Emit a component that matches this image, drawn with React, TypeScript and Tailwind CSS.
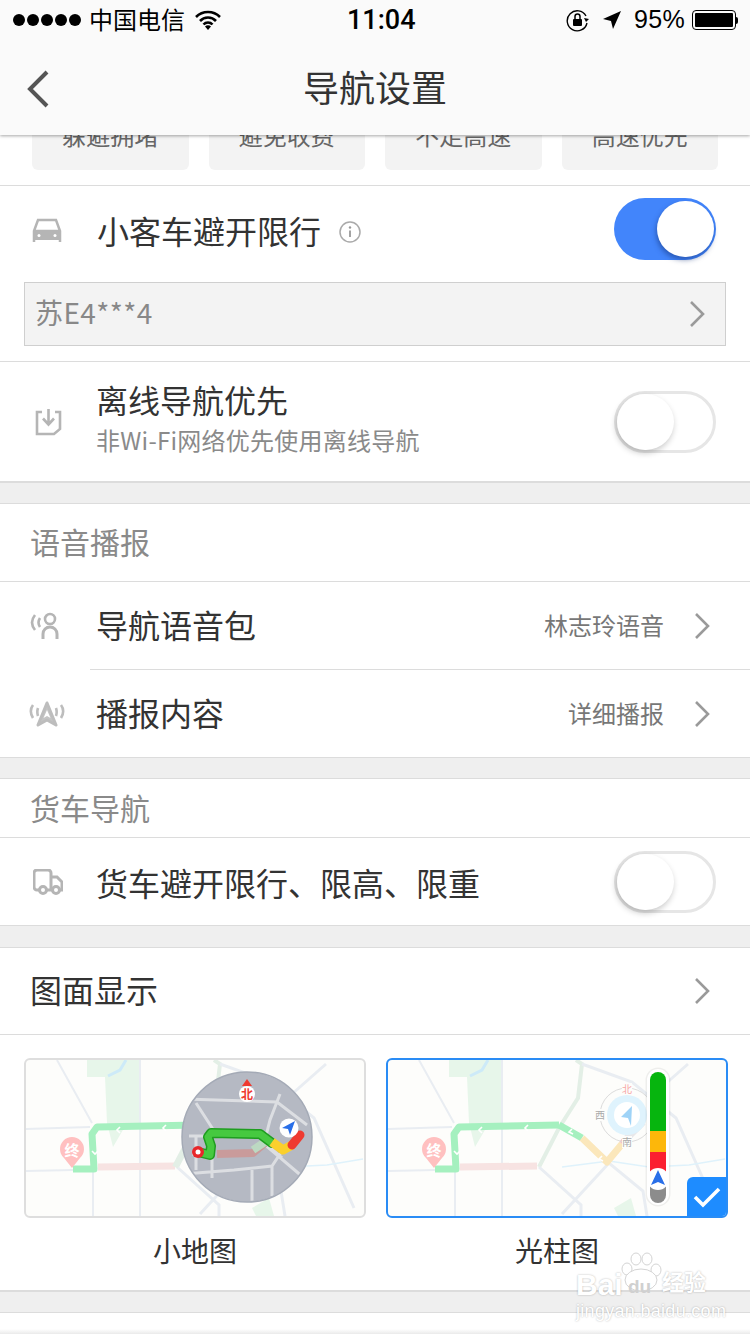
import type { ReactNode } from "react";

const Chevron = () => (
  <svg width="16" height="28" viewBox="0 0 16 28" fill="none" className="shrink-0">
    <path d="M2 2l12 12L2 26" stroke="#9a9a9a" strokeWidth="2.6" />
  </svg>
);

const Band = ({ className }: { className?: string }) => (
  <div className={`bg-[#efefef] border-y border-[#dcdcdc] ${className ?? "h-[22px]"}`} />
);

const Toggle = ({ on }: { on?: boolean }) =>
  on ? (
    <div className="relative w-[102px] h-[62px] rounded-full bg-[#4285fb] shrink-0">
      <div className="absolute right-[2px] top-[3px] w-[57px] h-[56px] rounded-full bg-white shadow-[-1px_3px_5px_rgba(20,50,120,0.5)]" />
    </div>
  ) : (
    <div className="relative w-[102px] h-[62px] rounded-full border-[3px] border-[#e6e6e6] bg-white shrink-0">
      <div className="absolute left-0 top-0 w-[57px] h-[56px] rounded-full bg-white shadow-[-1px_3px_6px_rgba(0,0,0,0.22)]" />
    </div>
  );

const Row = ({
  icon,
  title,
  value,
  className,
}: {
  icon: ReactNode;
  title: string;
  value: string;
  className?: string;
}) => (
  <div className={`flex items-center pl-[30px] pr-[40px] ${className ?? ""}`}>
    <div className="w-[66px] shrink-0">{icon}</div>
    <div className="flex-1 text-[32px] text-[#333] pb-[4px]">{title}</div>
    <div className="text-[24px] text-[#777] mr-[30px] pb-[2px]">{value}</div>
    <Chevron />
  </div>
);

const BaseMap = () => (
  <>
    <polygon points="63,2 116,2 116,65 103,65 89,89 83,65 81,19 63,19" fill="#e7f6ea" />
    <path d="M84 18l12-6 6-10" stroke="#cdeaf8" strokeWidth="3" fill="none" />
    <path d="M33 2l35 63M1 71l65-2M1 113l48-1M69 112v46M116 2v156" stroke="#e9edf2" strokeWidth="2" fill="none" />
    <path d="M190 2l6 4-4 34-19 30-20 39" stroke="#e3efe6" strokeWidth="4" fill="none" />
    <path d="M196 6l50 18 44 36 40 90M176 156l47-51 34 28 4 25M153 109l42 38v11M268 36l34-30" stroke="#e9edf2" strokeWidth="3" fill="none" />
    <path d="M176 109l47-6 40 6 40-2 36-6" stroke="#dff2fb" strokeWidth="1.5" fill="none" />
    <polygon points="228,150 245,140 250,158 232,158" fill="#e7f6ea" />
    <path d="M74 109l77-1" stroke="#f7e3e2" strokeWidth="7" fill="none" />
    <path d="M49 111h21l-2-35 5-7 100-2" stroke="#a5f0bf" strokeWidth="7" fill="none" strokeLinejoin="round" />
    <path d="M96 69l-3 3 3 3M142 67l-3 3 3 3M68 93l3 3 3-3" stroke="#fff" strokeWidth="1.6" fill="none" />
    <path d="M48 110l-8-10a12 12 0 1 1 16 0z" fill="#ffc0c0" />
    <text x="48" y="98" textAnchor="middle" fontSize="15" fill="#fff" fontWeight="700">终</text>
  </>
);

const SmallMap = () => (
  <svg viewBox="0 0 338 156" className="block w-full h-full">
    <defs>
      <clipPath id="disc">
        <circle cx="223" cy="79" r="64" />
      </clipPath>
    </defs>
    <g transform="translate(-2 -2)">
      <BaseMap />
      <path d="M173 67l-22 42" stroke="#e3efe6" strokeWidth="6" />
      <circle cx="223" cy="79" r="65" fill="#b5b9c3" stroke="#a4aab6" strokeWidth="1.5" />
      <g clipPath="url(#disc)" fill="none" stroke="#dcdee2" strokeWidth="3">
        <path d="M160 41l93 3 30 23M172 45l22 34M256 36l-10 26-6 24 40 34M165 78h30M168 96h8M172 78v34M188 100v20M160 116l50-4 38-4 12-18M228 112v34M248 108v30M258 100l-16-14" />
      </g>
      <path d="M193 96l36-1 12-10" stroke="#c99b9b" strokeWidth="8" fill="none" strokeLinejoin="round" />
      <path d="M229 92l12-8" stroke="#bcd9c2" strokeWidth="8" />
      <path d="M174 94l12 3 1-9-3-9 3-4 49 1 12 9" stroke="#1f9d20" strokeWidth="10" fill="none" strokeLinejoin="round" strokeLinecap="round" />
      <path d="M174 94l12 3 1-9-3-9 3-4 49 1 12 9" stroke="#46c940" strokeWidth="7" fill="none" strokeLinejoin="round" strokeLinecap="round" />
      <path d="M248 84l11 8 9-5" stroke="#fbd02c" strokeWidth="9" fill="none" strokeLinejoin="round" />
      <path d="M268 87l8-10" stroke="#ef3a30" strokeWidth="9" strokeLinecap="round" />
      <circle cx="174" cy="94" r="6" fill="#e8262a" />
      <circle cx="174" cy="94" r="2.5" fill="#fff" />
      <circle cx="265" cy="70" r="9.5" fill="#fff" />
      <path d="M271 63l-13 7 6 1 2 6z" fill="#2a6fe8" />
      <circle cx="223" cy="36" r="8" fill="#fff" />
      <path d="M223 21l5 7h-10z" fill="#ef3a30" />
      <text x="223" y="41" textAnchor="middle" fontSize="12" fill="#ef3a30" fontWeight="700">北</text>
    </g>
  </svg>
);

const BarMap = () => (
  <svg viewBox="0 0 338 156" className="block w-full h-full">
    <g transform="translate(-2 -2)">
      <BaseMap />
      <path d="M173 67l23 13" stroke="#a5f0bf" strokeWidth="7" fill="none" />
      <path d="M196 80l25 24 15-18" stroke="#fbe7bb" strokeWidth="7" fill="none" strokeLinejoin="round" />
      <path d="M236 86l5-6" stroke="#f7c4c2" strokeWidth="7" />
      <path d="M241 80l16-16" stroke="#e8e8ea" strokeWidth="7" />
      <path d="M186 71l-3 3 4 2M216 98l-3 3 4 2" stroke="#fff" strokeWidth="1.6" fill="none" />
      <circle cx="241" cy="57" r="27" fill="none" stroke="#dcdcdc" strokeWidth="1" />
      <circle cx="241" cy="57" r="20" fill="#dff3fd" />
      <circle cx="241" cy="57" r="13" fill="#fff" />
      <path d="M246 48l-11 11 7 1 3 8z" fill="#9fd3f7" />
      <rect x="236" y="25" width="10" height="12" fill="#fdfdfb" />
      <text x="241" y="35" textAnchor="middle" fontSize="10" fill="#f7a5a5">北</text>
      <rect x="209" y="51" width="10" height="12" fill="#fdfdfb" />
      <text x="214" y="61" textAnchor="middle" fontSize="10" fill="#aaa">西</text>
      <rect x="236" y="78" width="10" height="12" fill="#fdfdfb" />
      <text x="241" y="88" textAnchor="middle" fontSize="10" fill="#aaa">南</text>
      <rect x="259.500" y="9.500" width="25" height="139" rx="12.500" fill="#000" opacity="0.06" />
      <rect x="261" y="11" width="22" height="136" rx="11" fill="#fff" />
      <path d="M264 73V22a8 8 0 0 1 16 0v51z" fill="#06b50e" />
      <rect x="264" y="73" width="16" height="21" fill="#fdb70a" />
      <rect x="264" y="94" width="16" height="20" fill="#fb2030" />
      <path d="M264 114h16v23a8 8 0 0 1-16 0z" fill="#8c8c8c" />
      <circle cx="272" cy="121" r="11" fill="#fff" />
      <path d="M272 112l7 15-7-3-7 3z" fill="#2a6fe8" />
    </g>
  </svg>
);

export default function App() {
  return (
    <div className="relative w-[750px] h-[1334px] overflow-hidden bg-white font-['Noto_Sans_CJK_SC',sans-serif] text-[#333]">
      {/* header */}
      <header className="relative z-10 h-[135px] bg-[#fafafa] shadow-[0_1px_3px_rgba(0,0,0,0.35)]">
        <div className="relative flex items-center h-[40px] pl-[13px] pr-[12px] text-black text-[24px]">
          <div className="flex gap-[2px]">
            {[0, 1, 2, 3, 4].map((i) => (
              <span key={i} className="w-[12px] h-[12px] rounded-full bg-black" />
            ))}
          </div>
          <span className="ml-[8px] pb-[2px]">中国电信</span>
          <svg width="26" height="20" viewBox="0 0 26 20" className="ml-[10px]">
            <path d="M1 7a17 17 0 0 1 24 0M5 11a11 11 0 0 1 16 0M8.500 14.500a6 6 0 0 1 9 0" fill="none" stroke="#000" strokeWidth="2.6" />
            <path d="M13 20l-3-3.500a4 4 0 0 1 6 0z" fill="#000" />
          </svg>
          <span className="absolute left-[347px] font-['Roboto',sans-serif] text-[27px] font-medium">11:04</span>
          <div className="ml-auto flex items-center">
            <svg width="24" height="24" viewBox="0 0 24 24">
              <path d="M20 8a10 10 0 1 0 1 7" fill="none" stroke="#000" strokeWidth="1.400" />
              <path d="M23 11l-3 3-2-4z" fill="#000" />
              <rect x="7" y="11" width="9" height="7" rx="1" fill="#000" />
              <path d="M9 11V8.500a2.500 2.500 0 0 1 5 0V11" fill="none" stroke="#000" strokeWidth="1.500" />
            </svg>
            <svg width="20" height="20" viewBox="0 0 20 20" className="ml-[12px]">
              <path d="M19 1L1 9l8 2 2 8z" fill="#000" />
            </svg>
            <span className="ml-[12px] font-['Liberation_Sans',sans-serif] text-[25px] tracking-[0.3px]">95%</span>
            <div className="ml-[7px] flex items-center">
              <div className="w-[44px] h-[20px] border border-black rounded-[4px] p-[2px]">
                <div className="w-[38px] h-full bg-black rounded-[1px]" />
              </div>
              <div className="w-[2px] h-[7px] bg-black rounded-r-sm" />
            </div>
          </div>
        </div>
        <div className="relative flex items-center justify-center h-[95px] pb-[4px]">
          <svg width="24" height="38" viewBox="0 0 24 38" className="absolute left-[26px] top-[30px]">
            <path d="M21 2L4 19l17 17" fill="none" stroke="#555" strokeWidth="4" />
          </svg>
          <span className="text-[36px] text-[#333]">导航设置</span>
        </div>
      </header>

      {/* route preference chips, scrolled under the header */}
      <div className="-mt-[29px] pb-[15px] px-[32px] grid grid-cols-4 gap-x-[20px] border-b border-[#dcdcdc]">
        {["躲避拥堵", "避免收费", "不走高速", "高速优先"].map((t) => (
          <div key={t} className="h-[64px] pb-[6px] rounded-md bg-[#f3f3f3] flex items-center justify-center text-[24px] text-[#666]">
            {t}
          </div>
        ))}
      </div>

      {/* car restriction */}
      <div className="h-[176px] px-[24px] border-b border-[#dcdcdc]">
        <div className="flex items-center h-[96px] pl-[8px] pr-[10px] pb-[8px]">
          <div className="w-[65px]">
            <svg width="30" height="28" viewBox="0 0 30 28" fill="none">
              <path d="M2 26V15l4-11h18l4 11v11M2 15h26" stroke="#b5b5b5" strokeWidth="2.500" />
              <path d="M2 15h26v9H2z" fill="#b5b5b5" />
              <circle cx="7" cy="19.500" r="1.500" fill="#fff" />
              <circle cx="23" cy="19.500" r="1.500" fill="#fff" />
            </svg>
          </div>
          <span className="text-[32px] text-[#333]">小客车避开限行</span>
          <svg width="22" height="22" viewBox="0 0 22 22" fill="none" className="ml-[18px] mt-[4px]">
            <circle cx="11" cy="11" r="10" stroke="#aaa" strokeWidth="1.500" />
            <path d="M11 9.500V16" stroke="#999" strokeWidth="1.800" />
            <circle cx="11" cy="6.500" r="1.200" fill="#999" />
          </svg>
          <div className="ml-auto -mt-[2px]">
            <Toggle on />
          </div>
        </div>
        <div className="flex items-center justify-between h-[64px] pl-[10px] pr-[20px] bg-[#f3f3f3] border border-[#cfcfcf]">
          <span className="text-[28px] text-[#888] pb-[4px] tracking-[0.4px]">苏E4***4</span>
          <Chevron />
        </div>
      </div>

      {/* offline nav */}
      <div className="flex items-center h-[120px] pl-[34px] pr-[34px] border-b border-[#dcdcdc]">
        <div className="w-[62px]">
          <svg width="28" height="28" viewBox="0 0 28 28" fill="none">
            <path d="M8 4H3v22h17l6-5V4h-5" stroke="#b5b5b5" strokeWidth="2.600" />
            <path d="M14.500 1v14M9 10.500l5.500 6 5.500-6" stroke="#b5b5b5" strokeWidth="2.600" />
          </svg>
        </div>
        <div className="flex-1 pb-[10px]">
          <div className="text-[32px] leading-[44px] mb-[2px] text-[#333]">离线导航优先</div>
          <div className="text-[24px] leading-[34px] text-[#8a8a8a] tracking-[0.25px]">非Wi-Fi网络优先使用离线导航</div>
        </div>
        <Toggle />
      </div>

      <Band />

      {/* voice */}
      <div className="h-[78px] pl-[30px] pb-[2px] flex items-center text-[30px] text-[#8a8a8a] border-b border-[#dcdcdc]">
        语音播报
      </div>
      <Row
        className="h-[87px]"
        title="导航语音包"
        value="林志玲语音"
        icon={
          <svg width="32" height="28" viewBox="0 0 32 28" fill="none">
            <circle cx="20" cy="7" r="5" stroke="#b5b5b5" strokeWidth="2.600" />
            <path d="M13 27v-5a7 7 0 0 1 14 0v5" stroke="#b5b5b5" strokeWidth="3" />
            <path d="M5 3c-4 5-4 10 0 15M10 6c-2 3-2 6 0 9" stroke="#b5b5b5" strokeWidth="2.600" />
          </svg>
        }
      />
      <div className="ml-[90px] h-px bg-[#dcdcdc]" />
      <Row
        className="h-[87px]"
        title="播报内容"
        value="详细播报"
        icon={
          <svg width="36" height="26" viewBox="0 0 36 26" fill="none" className="-ml-[1px]">
            <path d="M18 2l9 22-9-5-9 5z" fill="#c4c4c4" stroke="#bdbdbd" strokeWidth="3" strokeLinejoin="round" />
            <path d="M18 9l3.500 8-3.500-2-3.500 2z" fill="#fff" />
            <path d="M4 4c-3 4-3 8 0 13M9 7c-1 3-1 5 0 8M32 4c3 4 3 8 0 13M27 7c1 3 1 5 0 8" stroke="#bdbdbd" strokeWidth="2.600" />
          </svg>
        }
      />
      <Band />

      {/* truck */}
      <div className="h-[59px] pl-[30px] pb-[2px] flex items-center text-[30px] text-[#8a8a8a] border-b border-[#dcdcdc]">
        货车导航
      </div>
      <div className="flex items-center h-[87px] pl-[33px] pr-[34px]">
        <div className="w-[63px]">
          <svg width="30" height="26" viewBox="0 0 30 26" fill="none">
            <path d="M7 21H4a3 3 0 0 1-3-3V4a3 3 0 0 1 3-3h11a3 3 0 0 1 3 3v17h-5" stroke="#b5b5b5" strokeWidth="3" />
            <path d="M18 8h6l5 5v8h-2" stroke="#b5b5b5" strokeWidth="3" />
            <circle cx="10" cy="21" r="3.500" stroke="#b5b5b5" strokeWidth="3" />
            <circle cx="23" cy="21" r="3.500" stroke="#b5b5b5" strokeWidth="3" />
          </svg>
        </div>
        <span className="flex-1 text-[32px] text-[#333] pt-[1px]">货车避开限行、限高、限重</span>
        <Toggle />
      </div>
      <Band className="h-[23px]" />

      {/* map display */}
      <div className="flex items-center justify-between h-[87px] pl-[30px] pr-[40px] border-b border-[#dcdcdc]">
        <span className="text-[32px] text-[#333] pb-[4px]">图面显示</span>
        <Chevron />
      </div>
      <div className="h-[256px] pl-[24px] pt-[23px] border-b border-[#dcdcdc]">
        <div className="grid grid-cols-[342px_342px] gap-x-[20px]">
          <div>
            <div className="h-[160px] rounded-md border-2 border-[#dedede] bg-[#fdfdfb] overflow-hidden">
              <SmallMap />
            </div>
            <div className="mt-[11px] text-center text-[28px] text-[#333]">小地图</div>
          </div>
          <div>
            <div className="relative h-[160px] rounded-md border-2 border-[#2a8cf5] bg-[#fdfdfb] overflow-hidden">
              <BarMap />
              <div className="absolute right-0 bottom-0 w-[39px] h-[39px] bg-[#1e8cff] rounded-tl-md flex items-center justify-center">
                <svg width="28" height="22" viewBox="0 0 28 22" fill="none">
                  <path d="M2 11l8 8L26 3" stroke="#fff" strokeWidth="3.600" />
                </svg>
              </div>
            </div>
            <div className="mt-[11px] text-center text-[28px] text-[#333]">光柱图</div>
          </div>
        </div>
      </div>
      <Band />
      <div className="flex flex-col justify-end h-[22px]">
        <div className="h-[6px] bg-gradient-to-b from-white to-[#e6e6e6]" />
      </div>

      {/* watermark */}
      <div className="absolute left-[576px] top-[1252px] w-[136px] h-[68px] text-white font-['Liberation_Sans',sans-serif] [text-shadow:0_0_2px_rgba(0,0,0,0.3)]">
        <svg width="44" height="40" viewBox="0 0 44 40" className="absolute left-[43px] top-0">
          <g fill="#fff" stroke="#d4d4d4" strokeWidth="1">
            <ellipse cx="8" cy="17" rx="5" ry="6" />
            <ellipse cx="17" cy="7" rx="5" ry="6" />
            <ellipse cx="28" cy="7" rx="5" ry="6" />
            <ellipse cx="37" cy="18" rx="5" ry="6" />
            <ellipse cx="22" cy="28" rx="16" ry="11" />
          </g>
        </svg>
        <span className="absolute left-0 top-[20px] font-bold text-[30px] leading-[26px]">Bai</span>
        <span className="absolute left-[52px] top-[24px] text-[#d0d0d0] font-bold text-[19px] leading-[22px] [text-shadow:none]">du</span>
        <span className="absolute left-[86px] top-[16px] font-['Noto_Sans_CJK_SC',sans-serif] font-bold text-[22px] leading-[24px]">经验</span>
        <span className="absolute left-0 top-[50px] text-[18px] leading-[18px] tracking-[0.3px] whitespace-nowrap">jingyan.baidu.com</span>
      </div>
    </div>
  );
}
